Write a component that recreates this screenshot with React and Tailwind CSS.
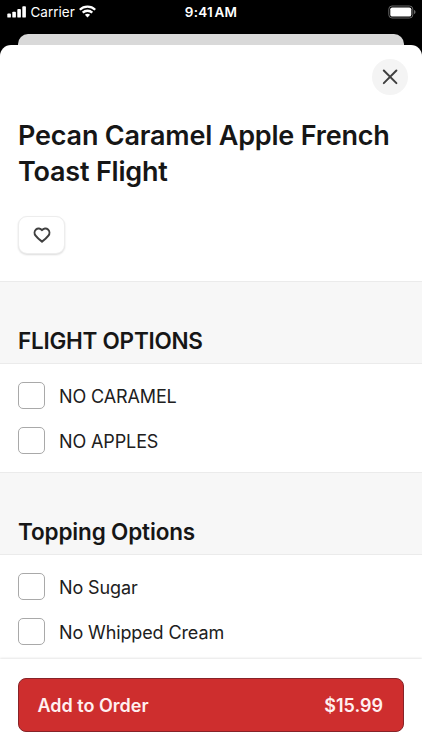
import React, { useState } from 'react';

const sections = [
  { id: 'flight', title: 'FLIGHT OPTIONS', tracking: 'tracking-[-0.25px]', options: ['NO CARAMEL', 'NO APPLES'] },
  { id: 'topping', title: 'Topping Options', tracking: 'tracking-[-0.15px]', options: ['No Sugar', 'No Whipped Cream'] },
];

function StatusBar() {
  return (
    <div className="h-[34px] shrink-0 grid grid-cols-3 px-[7px] text-white text-[13.5px] leading-6">
      <div className="flex h-6 items-center">
        <svg width="19" height="12" viewBox="0 0 19 12" fill="currentColor" className="shrink-0 -mt-px">
          <rect x="0.3" y="7.6" width="3.6" height="4" rx="0.9" />
          <rect x="5.3" y="5.7" width="3.6" height="5.9" rx="0.9" />
          <rect x="10.3" y="3" width="3.6" height="8.6" rx="0.9" />
          <rect x="15.300" y="0.2" width="3.6" height="11.4" rx="0.9" />
        </svg>
        <span className="ml-[4.5px]">Carrier</span>
        <svg width="17" height="13" viewBox="0 0 17 13" fill="none" stroke="currentColor" strokeWidth="2.3" className="ml-[4px] -mt-px shrink-0">
          <path d="M0.8 4.8C5.1 0.6 11.9 0.6 16.2 4.8" />
          <path d="M3.7 7.7C6.4 5.1 10.6 5.1 13.3 7.7" />
          <path d="M8.5 12.4L5.9 9.8C7.4 8.5 9.6 8.5 11.1 9.8Z" fill="currentColor" stroke="none" />
        </svg>
      </div>
      <span className="text-center font-semibold tracking-[0.2px] [word-spacing:-2px]">9:41 AM</span>
      <div className="flex h-6 items-center justify-end">
        <svg width="28" height="14" viewBox="0 0 28 14" className="-mt-px -mr-px">
          <rect x="0.8" y="1" width="24" height="12" rx="3.2" fill="none" stroke="#666" strokeWidth="1" />
          <rect x="2.3" y="2.4" width="21" height="9.2" rx="1.9" fill="#fff" />
          <path d="M26 5v4c1-.4 1.5-1.1 1.5-2S27 5.4 26 5z" fill="#666" />
        </svg>
      </div>
    </div>
  );
}

function Option({ label, checked, onToggle }) {
  return (
    <label className="flex h-[27px] items-center gap-[14px] text-[18px] leading-[27px] tracking-[-0.12px] text-[#202020] cursor-pointer">
      <input
        type="checkbox"
        checked={checked}
        onChange={onToggle}
        className="appearance-none size-[27px] shrink-0 rounded-[5px] border border-[#a9a9a9] bg-white checked:bg-[#ce2e2e]"
      />
      <span className="pt-px">{label}</span>
    </label>
  );
}

export default function App() {
  const [selected, setSelected] = useState([]);

  const toggle = (option) =>
    setSelected(prev => prev.includes(option) ? prev.filter(o => o !== option) : [...prev, option]);

  return (
    <div className="h-[750px] w-full overflow-hidden bg-black flex flex-col font-[Inter,sans-serif] antialiased">
      <StatusBar />

      {/* Edge of the screen behind the sheet */}
      <div className="h-[26px] shrink-0 mx-[18px] rounded-t-[10px] bg-[#d9d9d9]"></div>

      <div className="relative -mt-[15px] flex-1 min-h-0 flex flex-col rounded-t-[11px] bg-white overflow-hidden">
        <div className="h-[236px] shrink-0 px-[18px]">
          <div className="flex justify-end -mr-[4px] pt-[14px]">
            <button aria-label="Close" className="size-9 rounded-full bg-[#f4f4f4] flex items-center justify-center">
              <svg width="16" height="16" viewBox="0 0 16 16" fill="none" stroke="#404040" strokeWidth="2" strokeLinecap="round">
                <path d="M1.8 1.5L14.4 14.1M14.4 1.5L1.8 14.1" />
              </svg>
            </button>
          </div>
          <h1 className="mt-[23px] text-[27px] leading-9 font-semibold tracking-[-0.2px] text-[#161616] whitespace-nowrap">
            Pecan Caramel Apple French<br />Toast Flight
          </h1>
          <button aria-label="Favorite" className="mt-[26px] h-[38px] w-[47px] rounded-[9px] border border-[#ededed] bg-white shadow-[0_1px_2px_rgba(0,0,0,0.14)] flex items-center justify-center">
            <svg width="18" height="16" viewBox="0 0 18 16" fill="none" stroke="#404040" strokeWidth="2" strokeLinejoin="round">
              <path d="M9 3.2C7.500 1.200 4.700 .9 3 2.400C1.200 4 1.200 6.800 2.600 8.600C4.300 10.900 6.800 12.900 9 14.600C11.200 12.900 13.700 10.900 15.400 8.600C16.800 6.800 16.800 4 15 2.400C13.300 .9 10.500 1.200 9 3.200Z" />
            </svg>
          </button>
        </div>

        <div className="flex-1 min-h-0 overflow-hidden">
          {sections.map(section => (
            <section key={section.id} className="h-[191px]">
              <div className="h-[83px] flex items-end border-y border-[#ebebeb] bg-[#f7f7f7] px-[18px] pb-[7px]">
                <h2 className={`text-[22.5px] leading-[30px] font-semibold text-[#161616] ${section.tracking}`}>{section.title}</h2>
              </div>
              <div className="flex flex-col gap-[18px] px-[18px] pt-[18px]">
                {section.options.map(option => (
                  <Option
                    key={option}
                    label={option}
                    checked={selected.includes(option)}
                    onToggle={() => toggle(option)}
                  />
                ))}
              </div>
            </section>
          ))}
        </div>

        {/* Order bar */}
        <div className="relative h-[91px] shrink-0 bg-white px-[18px] pt-[19px] shadow-[0_-1px_2px_rgba(0,0,0,0.1)]">
          <button className="h-[54px] w-full rounded-[8px] border border-[#872328] bg-[#ce2e2e] pl-[18.5px] pr-5 flex items-center justify-between text-[18px] font-semibold text-[#fff0f0]">
            <span>Add to Order</span>
            <span>$15.99</span>
          </button>
        </div>
      </div>
    </div>
  );
}
